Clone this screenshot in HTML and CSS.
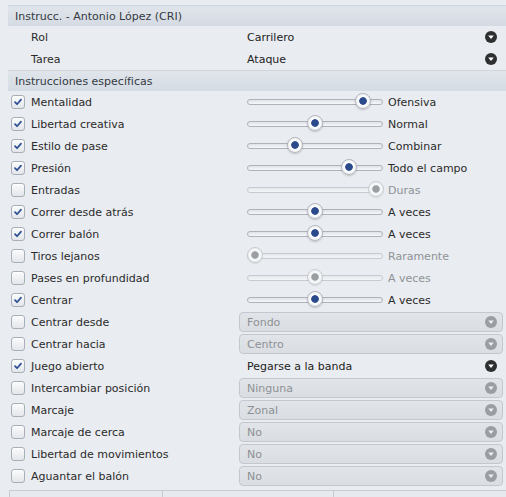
FILE: index.html
```html
<!DOCTYPE html>
<html lang="es">
<head>
<meta charset="utf-8">
<title>Instrucciones</title>
<link rel="stylesheet" href="styles.css">
</head>
<body>
<div class="panel">
  <div class="hdr">Instrucc. - Antonio López (CRI)</div>
  <div class="row">
    <div class="left"><span class="sp"></span><span class="lbl">Rol</span></div>
    <div class="combo flat"><span>Carrilero</span><svg class="arr" viewBox="0 0 12 12"><circle cx="6" cy="6" r="6"/><path d="M3.2 4.6h5.6L6 8z"/></svg></div>
  </div>
  <div class="row">
    <div class="left"><span class="sp"></span><span class="lbl">Tarea</span></div>
    <div class="combo flat"><span>Ataque</span><svg class="arr" viewBox="0 0 12 12"><circle cx="6" cy="6" r="6"/><path d="M3.2 4.6h5.6L6 8z"/></svg></div>
  </div>
  <div class="hdr">Instrucciones específicas</div>

  <div class="row">
    <div class="left"><span class="cb on"><svg viewBox="0 0 14 14"><path d="M3.5 7.2l2.4 2.4 4.6-5.4"/></svg></span><span class="lbl">Mentalidad</span></div>
    <div class="slider"><div class="track"><span class="knob" style="left:107px"></span></div><span class="val">Ofensiva</span></div>
  </div>
  <div class="row">
    <div class="left"><span class="cb on"><svg viewBox="0 0 14 14"><path d="M3.5 7.2l2.4 2.4 4.6-5.4"/></svg></span><span class="lbl">Libertad creativa</span></div>
    <div class="slider"><div class="track"><span class="knob" style="left:59px"></span></div><span class="val">Normal</span></div>
  </div>
  <div class="row">
    <div class="left"><span class="cb on"><svg viewBox="0 0 14 14"><path d="M3.5 7.2l2.4 2.4 4.6-5.4"/></svg></span><span class="lbl">Estilo de pase</span></div>
    <div class="slider"><div class="track"><span class="knob" style="left:39px"></span></div><span class="val">Combinar</span></div>
  </div>
  <div class="row">
    <div class="left"><span class="cb on"><svg viewBox="0 0 14 14"><path d="M3.5 7.2l2.4 2.4 4.6-5.4"/></svg></span><span class="lbl">Presión</span></div>
    <div class="slider"><div class="track"><span class="knob" style="left:93px"></span></div><span class="val">Todo el campo</span></div>
  </div>
  <div class="row">
    <div class="left"><span class="cb"></span><span class="lbl">Entradas</span></div>
    <div class="slider off"><div class="track"><span class="knob" style="left:120px"></span></div><span class="val">Duras</span></div>
  </div>
  <div class="row">
    <div class="left"><span class="cb on"><svg viewBox="0 0 14 14"><path d="M3.5 7.2l2.4 2.4 4.6-5.4"/></svg></span><span class="lbl">Correr desde atrás</span></div>
    <div class="slider"><div class="track"><span class="knob" style="left:59px"></span></div><span class="val">A veces</span></div>
  </div>
  <div class="row">
    <div class="left"><span class="cb on"><svg viewBox="0 0 14 14"><path d="M3.5 7.2l2.4 2.4 4.6-5.4"/></svg></span><span class="lbl">Correr balón</span></div>
    <div class="slider"><div class="track"><span class="knob" style="left:59px"></span></div><span class="val">A veces</span></div>
  </div>
  <div class="row">
    <div class="left"><span class="cb"></span><span class="lbl">Tiros lejanos</span></div>
    <div class="slider off"><div class="track"><span class="knob" style="left:-1px"></span></div><span class="val">Raramente</span></div>
  </div>
  <div class="row">
    <div class="left"><span class="cb"></span><span class="lbl">Pases en profundidad</span></div>
    <div class="slider off"><div class="track"><span class="knob" style="left:59px"></span></div><span class="val">A veces</span></div>
  </div>
  <div class="row">
    <div class="left"><span class="cb on"><svg viewBox="0 0 14 14"><path d="M3.5 7.2l2.4 2.4 4.6-5.4"/></svg></span><span class="lbl">Centrar</span></div>
    <div class="slider"><div class="track"><span class="knob" style="left:59px"></span></div><span class="val">A veces</span></div>
  </div>

  <div class="row">
    <div class="left"><span class="cb"></span><span class="lbl">Centrar desde</span></div>
    <div class="combo dis"><span>Fondo</span><svg class="arr" viewBox="0 0 12 12"><circle cx="6" cy="6" r="6"/><path d="M3.2 4.6h5.6L6 8z"/></svg></div>
  </div>
  <div class="row">
    <div class="left"><span class="cb"></span><span class="lbl">Centrar hacia</span></div>
    <div class="combo dis"><span>Centro</span><svg class="arr" viewBox="0 0 12 12"><circle cx="6" cy="6" r="6"/><path d="M3.2 4.6h5.6L6 8z"/></svg></div>
  </div>
  <div class="row">
    <div class="left"><span class="cb on"><svg viewBox="0 0 14 14"><path d="M3.5 7.2l2.4 2.4 4.6-5.4"/></svg></span><span class="lbl">Juego abierto</span></div>
    <div class="combo flat"><span>Pegarse a la banda</span><svg class="arr" viewBox="0 0 12 12"><circle cx="6" cy="6" r="6"/><path d="M3.2 4.6h5.6L6 8z"/></svg></div>
  </div>
  <div class="row">
    <div class="left"><span class="cb"></span><span class="lbl">Intercambiar posición</span></div>
    <div class="combo dis"><span>Ninguna</span><svg class="arr" viewBox="0 0 12 12"><circle cx="6" cy="6" r="6"/><path d="M3.2 4.6h5.6L6 8z"/></svg></div>
  </div>
  <div class="row">
    <div class="left"><span class="cb"></span><span class="lbl">Marcaje</span></div>
    <div class="combo dis"><span>Zonal</span><svg class="arr" viewBox="0 0 12 12"><circle cx="6" cy="6" r="6"/><path d="M3.2 4.6h5.6L6 8z"/></svg></div>
  </div>
  <div class="row">
    <div class="left"><span class="cb"></span><span class="lbl">Marcaje de cerca</span></div>
    <div class="combo dis"><span>No</span><svg class="arr" viewBox="0 0 12 12"><circle cx="6" cy="6" r="6"/><path d="M3.2 4.6h5.6L6 8z"/></svg></div>
  </div>
  <div class="row">
    <div class="left"><span class="cb"></span><span class="lbl">Libertad de movimientos</span></div>
    <div class="combo dis"><span>No</span><svg class="arr" viewBox="0 0 12 12"><circle cx="6" cy="6" r="6"/><path d="M3.2 4.6h5.6L6 8z"/></svg></div>
  </div>
  <div class="row">
    <div class="left"><span class="cb"></span><span class="lbl">Aguantar el balón</span></div>
    <div class="combo dis"><span>No</span><svg class="arr" viewBox="0 0 12 12"><circle cx="6" cy="6" r="6"/><path d="M3.2 4.6h5.6L6 8z"/></svg></div>
  </div>

  <div class="footer"><div class="tab"></div><div class="tab"></div><div class="tab"></div></div>
</div>
</body>
</html>
```
FILE: styles.css
```css
html, body {
  margin: 0;
  padding: 0;
  background: #e9ecf0;
  font-family: "DejaVu Sans", "Noto Sans", sans-serif;
  font-size: 11px;
  color: #2b2b2b;
  overflow: hidden;
}

.panel {
  padding: 5px 0 0 8px;
}

.hdr {
  height: 20px;
  line-height: 22px;
  padding-left: 7px;
  background: linear-gradient(#e0e5eb, #d5dbe3);
  border-top: 1px solid #cfd5dd;
  color: #333a42;
  overflow: hidden;
}

.row {
  display: grid;
  grid-template-columns: 231px 1fr;
  height: 22px;
  align-items: center;
  padding-right: 3px;
}

.left {
  display: flex;
  align-items: center;
  padding-left: 3px;
  gap: 6px;
}

.sp {
  width: 14px;
  height: 14px;
}

.cb {
  width: 12px;
  height: 12px;
  border: 1px solid #a9afb7;
  border-radius: 3px;
  background: linear-gradient(#fbfcfd, #e3e6ea);
  display: flex;
  box-shadow: inset 0 1px 0 #fff;
}

.cb svg {
  width: 12px;
  height: 12px;
}

.cb svg path {
  fill: none;
  stroke: #2c4f93;
  stroke-width: 2;
  stroke-linecap: round;
  stroke-linejoin: round;
}

.lbl {
  white-space: nowrap;
}

/* slider */
.slider {
  display: flex;
  align-items: center;
  padding-left: 8px;
  gap: 5px;
}

.track {
  position: relative;
  width: 134px;
  height: 4px;
  border: 1px solid #aeb3ba;
  border-radius: 3px;
  background: linear-gradient(#e0e3e7, #f6f7f9);
}

.knob {
  position: absolute;
  top: -7px;
  width: 14px;
  height: 14px;
  border: 1px solid #b3b8bf;
  border-radius: 50%;
  background: radial-gradient(circle at 50% 50%, #2a4a8c 0, #2a4a8c 3px, #3d5c9a 3.5px, #fdfdfe 4.2px, #e4e7eb 100%);
  box-shadow: 0 1px 2px rgba(0,0,0,0.18);
}

.val {
  white-space: nowrap;
}

.slider.off .track {
  border-color: #c7cbd1;
  background: linear-gradient(#e6e9ec, #f3f4f6);
}

.slider.off .knob {
  border-color: #c7cbd0;
  background: radial-gradient(circle at 50% 50%, #9a9da1 0, #9a9da1 3px, #b0b3b7 3.5px, #f7f8f9 4.2px, #e6e8eb 100%);
  box-shadow: 0 1px 1px rgba(0,0,0,0.08);
}

.slider.off .val {
  color: #8e9296;
}

/* combo */
.combo {
  display: flex;
  align-items: center;
  justify-content: space-between;
  height: 18px;
  padding: 0 5px 0 7px;
  border: 1px solid transparent;
  border-radius: 4px;
}

.combo.flat {
  color: #222;
}

.arr {
  width: 12px;
  height: 12px;
}

.arr circle {
  fill: #2e2f31;
}

.arr path {
  fill: #fff;
}

.combo.dis {
  background: linear-gradient(#e1e4e8, #dadde1);
  border-color: #c4c8ce;
  color: #8d9195;
}

.combo.dis .arr circle {
  fill: #9a9da1;
}

.combo.dis .arr path {
  fill: #eceef0;
}

/* footer */
.footer {
  display: grid;
  grid-template-columns: 153px 171px 1fr;
  margin-top: 3px;
  margin-left: 1px;
  height: 20px;
}

.tab {
  border: 1px solid #c8cdd4;
  border-right: none;
  background: #e6e9ed;
}
```
